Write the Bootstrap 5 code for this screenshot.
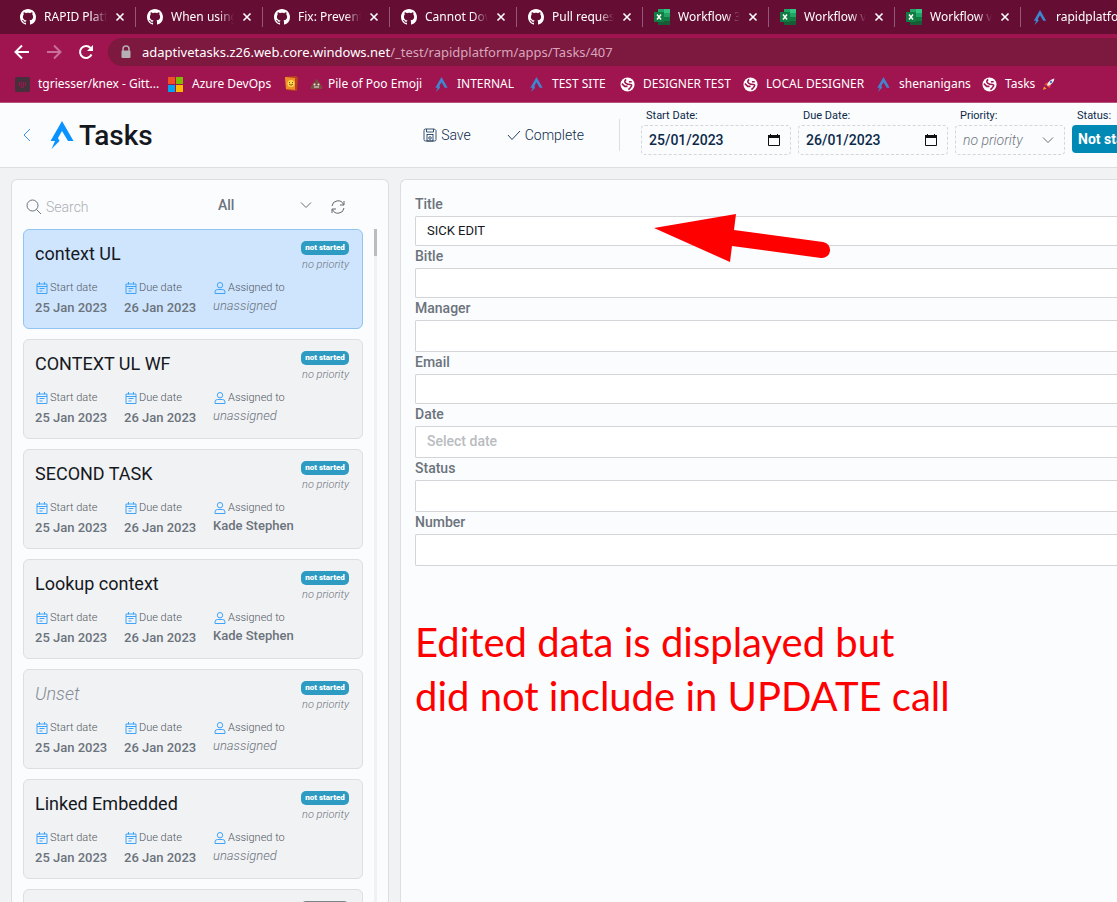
<!DOCTYPE html>
<html lang="en">
<head>
<meta charset="utf-8">
<meta name="viewport" content="width=device-width, initial-scale=1">
<title>Tasks</title>
<link href="https://cdn.jsdelivr.net/npm/bootstrap@5.3.0/dist/css/bootstrap.min.css" rel="stylesheet">
<style>
:root{--line:#dcdee1;--muted:#6b737c;--navy:#0b2a4a;--brand:#0a93ff}
body{font-family:Roboto,sans-serif;font-size:14px;line-height:20px;background:#f1f2f4;color:#15191e}
svg{flex:none;display:block}
input,select{min-width:0}
/* browser window */
.chrome{font-family:"Noto Sans","Open Sans",sans-serif;font-size:12px;color:#fff;background:#a0144f;border-bottom:1px solid #b9517f}
.tabstrip{background:#650d33;height:34px;padding-left:9px}
.tab{flex:0 0 126px;min-width:0;padding-left:11px}
.tab.wide{flex-basis:127px}
.tab::after{content:"";flex:none;width:1px;height:20px;background:#94597a;margin-left:2px}
.tab a{color:#fff;flex:1 1 0;min-width:0;overflow:hidden;white-space:nowrap;-webkit-mask-image:linear-gradient(90deg,#000 75%,transparent);mask-image:linear-gradient(90deg,#000 75%,transparent)}
.bare{background:none;border:0;padding:0;color:inherit}
.tools{height:36px;padding-left:14px;gap:16px}
.omnibox{background:#7d183f;height:28px;border-radius:14px 0 0 14px;padding-left:12px;gap:10px;margin-left:-2px}
.url{font-size:13px;color:#d9a5bc;white-space:nowrap}
.url b{font-weight:400;color:#fff}
.bookmarks{display:grid;grid-template-columns:153px 116px 26px 124px 95px 91px 123px 133px 106px 100px;height:32px;padding:0 0 4px 15px;align-items:center;overflow:hidden}
.bookmarks a{display:flex;align-items:center;gap:8px;color:#fff;text-decoration:none;white-space:nowrap}
.bookmarks a.snug{gap:5px}
/* app header */
.apphead{height:65px;background:#fbfcfe;border-bottom:1px solid var(--line);color:var(--navy);overflow:hidden}
.apphead h1{font-size:28px;line-height:36px;font-weight:500;color:#15191e;margin:0 0 0 5px;padding-top:2px}
.brandbar{padding-left:23px;min-width:0}
.brandbar .mark-a{margin-left:19px}
.cmd{display:flex;align-items:center;gap:4px;font-weight:300;color:var(--navy)}
.commit{margin:0 35px 0 36px}
.fields{width:476px;gap:7px;padding-top:5px;margin-left:21px;overflow:hidden}
.sep{width:1px;height:32px;background:var(--line)}
.field{flex:none;width:150px}
.field.short{width:110px}
.field label{display:block;font-size:11px;line-height:16px;font-weight:400;padding-left:5px;margin-bottom:1px}
.dash{border:1px dashed #d3d6da;border-radius:4px;height:30px;display:flex;align-items:center;padding:0 10px 0 7px;background:none;width:100%}
.dash input{border:0;background:none;padding:0;outline:0;width:100%;font-weight:500;color:var(--navy)}
.pick{appearance:none;background:url("data:image/svg+xml,%3Csvg xmlns='http://www.w3.org/2000/svg' width='12' height='8'%3E%3Cpath d='M1 1.500l5 5 5-5' fill='none' stroke='%23666c74'/%3E%3C/svg%3E") no-repeat right 10px center}
.pick.dash{font-weight:300;font-style:italic;color:#6f767e}
.pick.state{background:#0089b5;border:0;border-radius:4px;height:28px;width:100%;color:#fff;font-weight:700;padding:0 6px}
/* panels */
main{padding:11px 0 0 11px;gap:11px}
.panel{background:#fbfcfe;border:1px solid var(--line);border-bottom:0;border-radius:6px 6px 0 0}
.tasks{flex:0 0 378px;padding:0 0 0 11px;overflow:hidden}
.filters{height:49px;padding:4px 0 0 3px;gap:4px}
.filters input{border:0;background:none;outline:0;padding:0;width:168px;font-weight:300}
.filters input::placeholder{color:#a9afb5;opacity:1}
.filters .pick{border:0;width:94px;font-weight:500;color:var(--muted);background-position:right 0 center;margin-top:-3px;padding:0}
.filters .reload{margin-left:15px}
.cardlist{width:340px;display:flex;flex-direction:column;gap:10px}
.task{display:block;height:100px;flex:none;border:1px solid var(--line);border-radius:6px;background:#f1f2f4;padding:10px 13px 0 11px;text-decoration:none;color:var(--muted)}
.task.active{background:#cfe5fe;border-color:#90c4f1}
.task h2{font-size:18px;line-height:26px;font-weight:400;color:#15191e;margin:1px 0 0}
.task h2.none{font-weight:300;font-style:italic;color:#858c94}
.tag{display:block;background:#2e9bc3;color:#fff;font-size:8px;line-height:14px;font-weight:900;border-radius:5px;width:48px;text-align:center;margin:1px 0 3px}
.tag.dark{background:#7f8386}
.prio{font-size:11px;line-height:14px;font-weight:300;font-style:italic;text-align:right}
.facts{display:grid;grid-template-columns:89px 89px 1fr;margin-top:7px}
.facts span{display:flex;align-items:center;gap:2px;font-size:11px;line-height:18px;font-weight:300;padding-left:1px;color:#50575e}
.facts b,.facts i{display:block;font-size:13px;line-height:18px;font-weight:500;margin-top:2px}
.facts b.who,.facts i.who{margin-top:0}
.facts i{font-weight:300}
.rail{width:3px;background:#f1f1f1;margin-left:11px}
.rail div{height:27px;background:#bcbcbc}
.detail{padding:14px 0 0 14px;position:relative;overflow:hidden;border-right:0;border-radius:6px 0 0 0}
.detail label{display:block;font-weight:500;line-height:20px;height:22px;color:var(--muted)}
.detail .form-control{height:32px;border:1px solid #d3d5d8;border-right:0;border-radius:2px 0 0 2px;background:#fff;padding:0 11px 2px;font-size:14px;font-weight:500}
.detail .form-control::placeholder{color:#b9bcc0}
.detail .form-control.low{height:30px;font-size:13px;font-weight:400;color:#15191e}
.note{font-family:Lato,sans-serif;font-size:40px;line-height:54px;color:red;margin-top:49px}
.arrow{position:absolute;left:253px;top:34px}
</style>
</head>
<body class="vh-100 d-flex flex-column overflow-hidden">
<svg width="0" height="0" class="position-absolute" aria-hidden="true">
<symbol id="gh" viewBox="0 0 16 16"><path fill="#fff" d="M8 0C3.58 0 0 3.58 0 8c0 3.54 2.29 6.53 5.47 7.59.4.07.55-.17.55-.38 0-.19-.01-.82-.01-1.49-2.01.37-2.53-.49-2.69-.94-.09-.23-.48-.94-.82-1.13-.28-.15-.68-.52-.01-.53.63-.01 1.08.58 1.23.82.72 1.21 1.87.87 2.33.66.07-.52.28-.87.51-1.07-1.78-.2-3.64-.89-3.64-3.95 0-.87.31-1.59.82-2.15-.08-.2-.36-1.02.08-2.12 0 0 .67-.21 2.2.82.64-.18 1.32-.27 2-.27s1.36.09 2 .27c1.53-1.04 2.2-.82 2.2-.82.44 1.1.16 1.92.08 2.12.51.56.82 1.27.82 2.15 0 3.07-1.87 3.75-3.65 3.95.29.25.54.73.54 1.48 0 1.07-.01 1.93-.01 2.2 0 .21.15.46.55.38A8.01 8.01 0 0 0 16 8c0-4.42-3.58-8-8-8z"/></symbol>
<symbol id="xl" viewBox="0 0 16 16"><path fill="#21a366" d="M4 0h12v16H4z"/><path fill="#33c481" d="M10 0h6v4h-6z"/><path fill="#107c41" d="M4 4h6v4H4zm6 4h6v4h-6z"/><path fill="#185c37" d="M4 8h6v4h6v4H4z"/><path fill="#107c41" d="M0 3h10v10H0z"/><path d="M3 5.500l4 5m0-5l-4 5" stroke="#fff" stroke-width="1.500"/></symbol>
<symbol id="logo" viewBox="0 0 24 28"><path d="M12 0L23.500 20H18L12 10 8 17l1.500 3L1.500 28 5 20H.5z"/></symbol>
<symbol id="x" viewBox="0 0 10 10"><path d="M1.500 1.500l7 7m0-7l-7 7" stroke="#fff" stroke-width="1.600"/></symbol>
<symbol id="globe" viewBox="0 0 16 16"><circle cx="8" cy="8" r="7.500" fill="#fff"/><path d="M6.500 2.500Q4 5 6 6.500t5 1.500 0 3.500l-2 2M12.500 5h-3M2 7l3 3h3" fill="none" stroke="#a0144f" stroke-width="1.700"/></symbol>
<symbol id="cal" viewBox="0 0 12 12"><path d="M1 2h10v9.500H1zM1 4.500h10M3.500 0v2.500M8.500 0v2.500M3.500 6.500h5M3.500 9h3" fill="none" stroke="#3ea4fa"/></symbol>
<symbol id="man" viewBox="0 0 12 12"><circle cx="6" cy="3.200" r="2.700" fill="none" stroke="#3ea4fa"/><path d="M1 11.500V10q0-2.500 2.500-2.500h5Q11 7.500 11 10v1.500z" fill="none" stroke="#3ea4fa"/></symbol>
<symbol id="day" viewBox="0 0 12 14"><path d="M.5 2.500h11v10H.5z" fill="none" stroke="#111"/><path d="M0 2h12v3H0zM2 1h1v2H2zm7 0h1v2H9z" fill="#111"/></symbol>
</svg>

<div class="chrome flex-shrink-0">
  <nav class="tabstrip d-flex overflow-hidden" aria-label="Tabs">
    <div class="tab wide d-flex align-items-center gap-2"><svg width="16" height="16"><use href="#gh"/></svg><a href="#" class="text-decoration-none">RAPID Platf</a><button class="bare" aria-label="Close"><svg width="10" height="10"><use href="#x"/></svg></button></div>
    <div class="tab wide d-flex align-items-center gap-2"><svg width="16" height="16"><use href="#gh"/></svg><a href="#" class="text-decoration-none">When using</a><button class="bare" aria-label="Close"><svg width="10" height="10"><use href="#x"/></svg></button></div>
    <div class="tab wide d-flex align-items-center gap-2"><svg width="16" height="16"><use href="#gh"/></svg><a href="#" class="text-decoration-none">Fix: Prevent</a><button class="bare" aria-label="Close"><svg width="10" height="10"><use href="#x"/></svg></button></div>
    <div class="tab wide d-flex align-items-center gap-2"><svg width="16" height="16"><use href="#gh"/></svg><a href="#" class="text-decoration-none">Cannot Dow</a><button class="bare" aria-label="Close"><svg width="10" height="10"><use href="#x"/></svg></button></div>
    <div class="tab d-flex align-items-center gap-2"><svg width="16" height="16"><use href="#gh"/></svg><a href="#" class="text-decoration-none">Pull request</a><button class="bare" aria-label="Close"><svg width="10" height="10"><use href="#x"/></svg></button></div>
    <div class="tab d-flex align-items-center gap-2"><svg width="16" height="16"><use href="#xl"/></svg><a href="#" class="text-decoration-none">Workflow 3</a><button class="bare" aria-label="Close"><svg width="10" height="10"><use href="#x"/></svg></button></div>
    <div class="tab d-flex align-items-center gap-2"><svg width="16" height="16"><use href="#xl"/></svg><a href="#" class="text-decoration-none">Workflow v</a><button class="bare" aria-label="Close"><svg width="10" height="10"><use href="#x"/></svg></button></div>
    <div class="tab d-flex align-items-center gap-2"><svg width="16" height="16"><use href="#xl"/></svg><a href="#" class="text-decoration-none">Workflow v</a><button class="bare" aria-label="Close"><svg width="10" height="10"><use href="#x"/></svg></button></div>
    <div class="tab d-flex align-items-center gap-2"><svg width="16" height="15" fill="#3f86cf"><use href="#logo"/></svg><a href="#" class="text-decoration-none">rapidplatfo</a></div>
  </nav>
  <div class="tools d-flex align-items-center">
    <button class="bare" aria-label="Back"><svg width="16" height="16" fill="none" stroke="#fff" stroke-width="2"><path d="M15 8H2m6-6.500L1.500 8 8 14.500"/></svg></button>
    <button class="bare" aria-label="Forward"><svg width="16" height="16" fill="none" stroke="#c9709a" stroke-width="2"><path d="M1 8h13M8 1.500L14.500 8 8 14.500"/></svg></button>
    <button class="bare" aria-label="Reload"><svg width="16" height="16" fill="none" stroke="#fff" stroke-width="2"><path d="M13.500 10.500A6 6 0 1 1 12.500 4"/><path d="M15 1v6H9z" fill="#fff" stroke="none"/></svg></button>
    <div class="omnibox d-flex align-items-center flex-fill">
      <svg width="12" height="14"><path d="M3 6V4a3 3 0 0 1 6 0v2" fill="none" stroke="#b5b0b4" stroke-width="1.500"/><rect x="1.500" y="5.500" width="9" height="7.500" rx="1" fill="#b5b0b4"/></svg>
      <div class="url"><b>adaptivetasks.z26.web.core.windows.net</b>/_test/rapidplatform/apps/Tasks/407</div>
    </div>
  </div>
  <nav class="bookmarks" aria-label="Bookmarks">
    <a href="#"><svg width="15" height="15"><rect width="15" height="15" rx="2" fill="#46303c"/><path d="M4.500 5v4m2-4v6m2-6v6m2-6v4" stroke="#a0144f"/></svg>tgriesser/knex - Gitt...</a>
    <a href="#"><svg width="16" height="15"><path fill="#f25022" d="M0 0h7v7H0z"/><path fill="#7fba00" d="M8 0h7v7H8z"/><path fill="#00a4ef" d="M0 8h7v7H0z"/><path fill="#ffb900" d="M8 8h7v7H8z"/></svg>Azure DevOps</a>
    <a href="#" aria-label="Emoji book"><svg width="15" height="16"><path fill="#b8431d" d="M1 1l11-1 2 2-1 13-11-1z"/><path fill="#f0902b" d="M1 1l10 1v12L2 13z"/><circle cx="7" cy="7.500" r="3.500" fill="#ffd84a"/><path d="M5 8q2 2.500 4 0M5.500 6v1m3-1v1" stroke="#84500f" fill="none"/></svg></a>
    <a href="#" class="snug"><svg width="13" height="12"><path fill="#7a4d40" d="M6 1q3 1 2.500 3Q11 4.500 10.500 7q3 1 1.500 4H1Q-.5 8 2.500 7 2 4.500 5 4z"/><circle cx="4.500" cy="6.500" r="1" fill="#eee"/><circle cx="8.500" cy="6.500" r="1" fill="#eee"/><path d="M4 9h5" stroke="#eee"/></svg>Pile of Poo Emoji</a>
    <a href="#"><svg width="15" height="15" fill="#3f86cf"><use href="#logo"/></svg>INTERNAL</a>
    <a href="#"><svg width="15" height="15" fill="#3f86cf"><use href="#logo"/></svg>TEST SITE</a>
    <a href="#"><svg width="15" height="15"><use href="#globe"/></svg>DESIGNER TEST</a>
    <a href="#"><svg width="15" height="15"><use href="#globe"/></svg>LOCAL DESIGNER</a>
    <a href="#"><svg width="15" height="15" fill="#3f86cf"><use href="#logo"/></svg>shenanigans</a>
    <a href="#"><svg width="15" height="15"><use href="#globe"/></svg>Tasks <svg width="12" height="12" class="ms-n1"><path fill="#e64a3a" d="M3 5l3-1 2 2-1 4-2-1-2-2-2 0z"/><path fill="#e9eef5" d="M4 7Q6 1.500 11.500.5 10.500 6 5 8z"/><path fill="#f5a623" d="M0 12l1-3.500 2.500 2z"/><circle cx="8" cy="4" r="1.200" fill="#4b7bb5"/></svg></a>
  </nav>
</div>

<header class="apphead d-flex flex-shrink-0">
  <div class="brandbar d-flex align-items-center flex-fill">
    <button class="bare" aria-label="Go back"><svg width="8" height="14" fill="none" stroke="#3d8cf0"><path d="M7 1L1 7l6 6"/></svg></button>
    <svg width="24" height="28" fill="#0a93ff" class="mark-a"><use href="#logo"/></svg>
    <h1>Tasks</h1>
  </div>
  <div class="d-flex align-items-center flex-shrink-0">
    <button class="bare cmd"><svg width="14" height="14" fill="none" stroke="#0b2a4a" stroke-width=".8"><path d="M1 2.500Q1 1 2.500 1h9L13 2.500v9q0 1.500-1.500 1.500h-9Q1 13 1 11.500zM3.500 1v3h7V1"/><rect x="4" y="6.500" width="6" height="6.500"/><circle cx="7" cy="10" r="1.300"/></svg>Save</button>
    <button class="bare cmd commit"><svg width="14" height="12" fill="none" stroke="#0b2a4a" stroke-width=".9"><path d="M1 6l4 4.500L13 2"/></svg>Complete</button>
    <div class="sep"></div>
  </div>
  <div class="fields d-flex flex-shrink-0">
    <div class="field"><label for="sd">Start Date:</label><div class="dash"><input id="sd" value="25/01/2023"><button class="bare" aria-label="Pick start date"><svg width="12" height="14"><use href="#day"/></svg></button></div></div>
    <div class="field"><label for="dd">Due Date:</label><div class="dash"><input id="dd" value="26/01/2023"><button class="bare" aria-label="Pick due date"><svg width="12" height="14"><use href="#day"/></svg></button></div></div>
    <div class="field short"><label for="pr">Priority:</label><select id="pr" class="dash pick"><option>no priority</option></select></div>
    <div class="field short"><label for="st">Status:</label><select id="st" class="pick state"><option>Not started</option></select></div>
  </div>
</header>

<main class="d-flex flex-fill overflow-hidden">
  <section class="panel tasks d-flex flex-column">
    <div class="filters d-flex align-items-center flex-shrink-0">
      <svg width="16" height="16" fill="none" stroke="#6b737c"><circle cx="6.500" cy="6.500" r="5.500"/><path d="M10.500 10.500L15 15"/></svg>
      <input type="search" placeholder="Search" aria-label="Search">
      <select class="pick" aria-label="Filter"><option>All</option></select>
      <button class="bare reload" aria-label="Refresh"><svg width="14" height="14" fill="none" stroke="#5f666e"><path d="M1 6a6 6 0 0 1 11.500-1.500M13 8A6 6 0 0 1 1.500 9.500M13 1v4H9M1 13V9h4"/></svg></button>
    </div>
    <div class="d-flex flex-fill overflow-hidden">
      <div class="cardlist">
        <a href="#" class="task active"><div class="d-flex justify-content-between"><h2>context UL</h2><div><span class="tag">not started</span><div class="prio">no priority</div></div></div><div class="facts"><div><span><svg width="12" height="12"><use href="#cal"/></svg>Start date</span><b>25 Jan 2023</b></div><div><span><svg width="12" height="12"><use href="#cal"/></svg>Due date</span><b>26 Jan 2023</b></div><div><span><svg width="12" height="12"><use href="#man"/></svg>Assigned to</span><i class="who">unassigned</i></div></div></a>
        <a href="#" class="task"><div class="d-flex justify-content-between"><h2>CONTEXT UL WF</h2><div><span class="tag">not started</span><div class="prio">no priority</div></div></div><div class="facts"><div><span><svg width="12" height="12"><use href="#cal"/></svg>Start date</span><b>25 Jan 2023</b></div><div><span><svg width="12" height="12"><use href="#cal"/></svg>Due date</span><b>26 Jan 2023</b></div><div><span><svg width="12" height="12"><use href="#man"/></svg>Assigned to</span><i class="who">unassigned</i></div></div></a>
        <a href="#" class="task"><div class="d-flex justify-content-between"><h2>SECOND TASK</h2><div><span class="tag">not started</span><div class="prio">no priority</div></div></div><div class="facts"><div><span><svg width="12" height="12"><use href="#cal"/></svg>Start date</span><b>25 Jan 2023</b></div><div><span><svg width="12" height="12"><use href="#cal"/></svg>Due date</span><b>26 Jan 2023</b></div><div><span><svg width="12" height="12"><use href="#man"/></svg>Assigned to</span><b class="who">Kade Stephen</b></div></div></a>
        <a href="#" class="task"><div class="d-flex justify-content-between"><h2>Lookup context</h2><div><span class="tag">not started</span><div class="prio">no priority</div></div></div><div class="facts"><div><span><svg width="12" height="12"><use href="#cal"/></svg>Start date</span><b>25 Jan 2023</b></div><div><span><svg width="12" height="12"><use href="#cal"/></svg>Due date</span><b>26 Jan 2023</b></div><div><span><svg width="12" height="12"><use href="#man"/></svg>Assigned to</span><b class="who">Kade Stephen</b></div></div></a>
        <a href="#" class="task"><div class="d-flex justify-content-between"><h2 class="none">Unset</h2><div><span class="tag">not started</span><div class="prio">no priority</div></div></div><div class="facts"><div><span><svg width="12" height="12"><use href="#cal"/></svg>Start date</span><b>25 Jan 2023</b></div><div><span><svg width="12" height="12"><use href="#cal"/></svg>Due date</span><b>26 Jan 2023</b></div><div><span><svg width="12" height="12"><use href="#man"/></svg>Assigned to</span><i class="who">unassigned</i></div></div></a>
        <a href="#" class="task"><div class="d-flex justify-content-between"><h2>Linked Embedded</h2><div><span class="tag">not started</span><div class="prio">no priority</div></div></div><div class="facts"><div><span><svg width="12" height="12"><use href="#cal"/></svg>Start date</span><b>25 Jan 2023</b></div><div><span><svg width="12" height="12"><use href="#cal"/></svg>Due date</span><b>26 Jan 2023</b></div><div><span><svg width="12" height="12"><use href="#man"/></svg>Assigned to</span><i class="who">unassigned</i></div></div></a>
        <a href="#" class="task" aria-label="Next task"><div class="d-flex justify-content-end"><span class="tag dark">&nbsp;</span></div></a>
      </div>
      <div class="rail"><div></div></div>
    </div>
  </section>
  <section class="panel detail flex-fill">
    <label for="f1">Title</label><input id="f1" class="form-control low" value="SICK EDIT">
    <label for="f2">Bitle</label><input id="f2" class="form-control low">
    <label for="f3">Manager</label><input id="f3" class="form-control">
    <label for="f4">Email</label><input id="f4" class="form-control low">
    <label for="f5">Date</label><input id="f5" class="form-control" placeholder="Select date">
    <label for="f6">Status</label><input id="f6" class="form-control">
    <label for="f7">Number</label><input id="f7" class="form-control">
    <p class="note mb-0">Edited data is displayed but<br>did not include in UPDATE call</p>
    <svg class="arrow" width="178" height="50"><path fill="red" d="M0 14L82 0l-2 16 89 12a8 8 0 0 1-2 16L78 32l-2 16z"/></svg>
  </section>
</main>
<script src="https://cdn.jsdelivr.net/npm/bootstrap@5.3.0/dist/js/bootstrap.bundle.min.js"></script>
</body>
</html>
